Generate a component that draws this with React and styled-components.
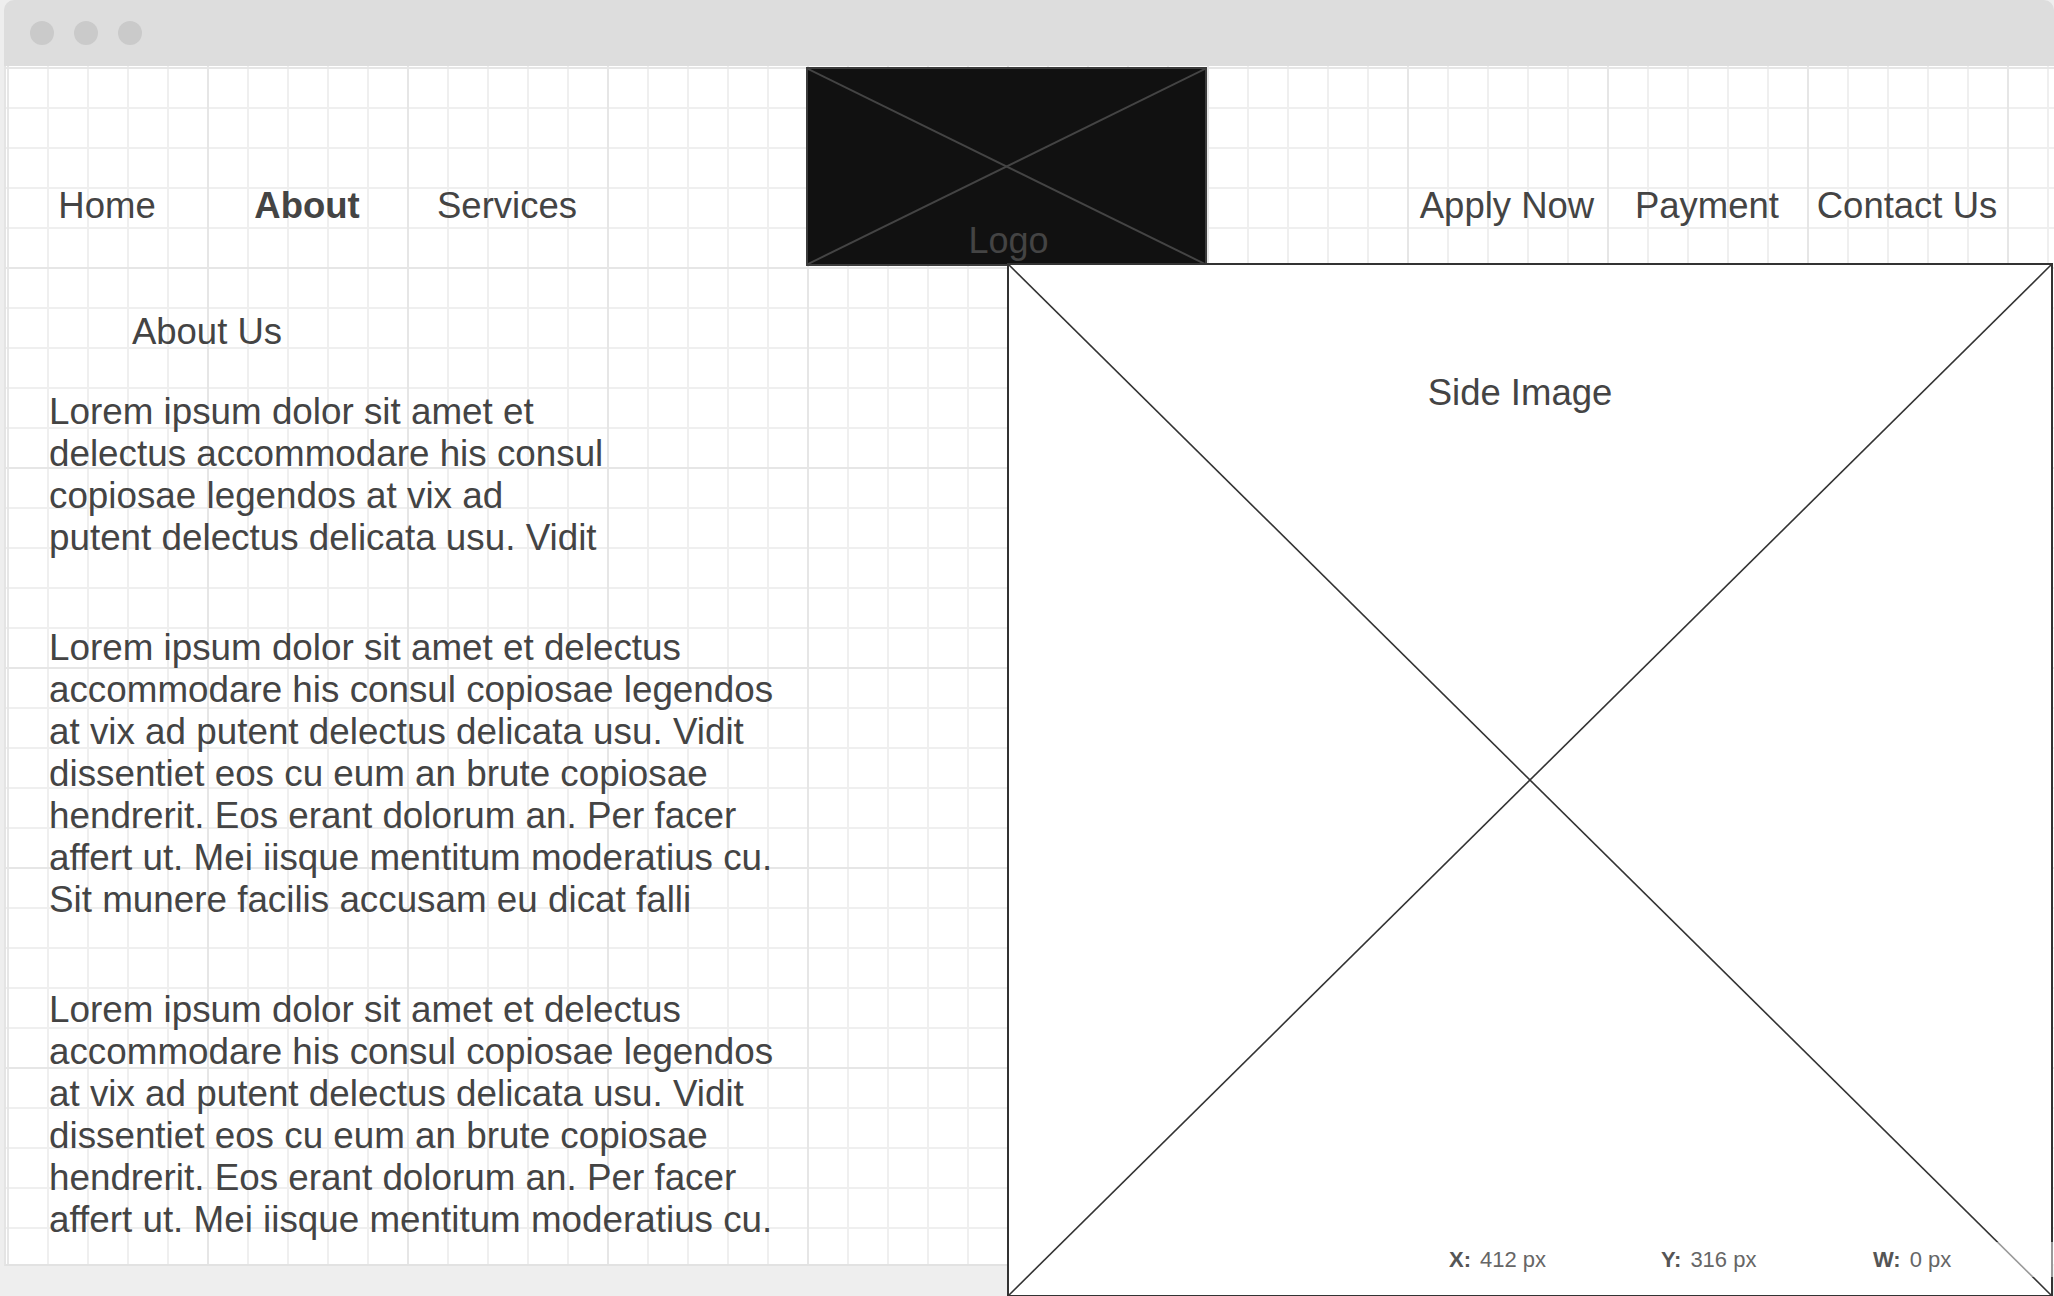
import React from "react";
import styled, { createGlobalStyle } from "styled-components";

const Global = createGlobalStyle`
  html, body {
    margin: 0;
    padding: 0;
    overflow: hidden;
    background: #eeeeee;
  }
  body {
    font-family: "Liberation Sans", Arial, sans-serif;
    color: #444444;
  }
  * { box-sizing: border-box; }
`;

const Page = styled.div`
  position: relative;
  width: 2054px;
  height: 1296px;
  overflow: hidden;
`;

const Frame = styled.div`
  margin-left: 4px;
  width: 2050px;
`;

const TitleBar = styled.div`
  height: 66px;
  background: #dddddd;
  border-radius: 10px 10px 0 0;
  display: flex;
  align-items: center;
  gap: 20px;
  padding-left: 26px;
`;

const Dot = styled.span`
  width: 24px;
  height: 24px;
  border-radius: 50%;
  background: #cacaca;
`;

const Canvas = styled.div`
  height: 1200px;
  background-color: #ffffff;
  border-left: 2px solid #e4e4e4;
  border-bottom: 2px solid #e2e2e2;
  padding-left: 1px;
  padding-top: 1px;
  background-image:
    linear-gradient(to right, #e6e6e6 0 2px, transparent 2px),
    linear-gradient(to bottom, #e6e6e6 0 2px, transparent 2px),
    linear-gradient(to right, #efefef 0 2px, transparent 2px),
    linear-gradient(to bottom, #efefef 0 2px, transparent 2px);
  background-size: 200px 200px, 200px 200px, 40px 40px, 40px 40px;
  background-position: 1px 1px;
`;

const Header = styled.header`
  display: grid;
  grid-template-columns: 200px 200px 200px 200px 400px 200px 200px 200px 200px;
  height: 199px;
`;

const NavItem = styled.div`
  display: flex;
  align-items: flex-end;
  justify-content: center;
  padding-bottom: 39px;
  font-size: 36.5px;
  line-height: 42px;
  font-weight: ${(p) => (p.$active ? 700 : 400)};
  color: #444444;
  white-space: nowrap;
`;

const LogoBox = styled.div`
  position: relative;
  height: 199px;
  margin-left: -1px;
  background: #111111;
  border: 2px solid #3c3c3c;
  display: flex;
  align-items: flex-end;
  justify-content: center;
  padding-bottom: 2px;
`;

const LogoText = styled.span`
  position: relative;
  font-size: 36px;
  line-height: 42px;
  color: #444444;
  padding-left: 4px;
`;

const Cross = styled.svg`
  position: absolute;
  inset: 0;
  width: 100%;
  height: 100%;
`;

const Main = styled.main`
  display: grid;
  grid-template-columns: 1000px 1046px;
  align-items: start;
`;

const TextColumn = styled.section`
  padding-left: 42px;
`;

const Heading = styled.h2`
  margin: 45px 0 0 -42px;
  width: 400px;
  text-align: center;
  font-size: 36.5px;
  line-height: 42px;
  font-weight: 400;
  color: #444444;
`;

const Paragraph = styled.p`
  margin: ${(p) => (p.$first ? "38px" : "68px")} 0 0;
  font-size: 36.8px;
  line-height: 42px;
  color: #444444;
`;

const Line = styled.span`
  display: block;
  white-space: nowrap;
`;

const SideImage = styled.div`
  position: relative;
  margin-top: -3px;
  height: 1034px;
  background: #ffffff;
  border: 2px solid #333333;
  display: flex;
  justify-content: center;
  padding: 107px 20px 0 0;
`;

const SideLabel = styled.span`
  position: relative;
  font-size: 36.5px;
  line-height: 42px;
  color: #444444;
`;

const Readout = styled.div`
  position: absolute;
  left: 1420px;
  top: 1242px;
  width: 634px;
  height: 35px;
  padding-left: 29px;
  display: flex;
  background: rgba(255, 255, 255, 0.5);
`;

const ReadoutItem = styled.div`
  flex: 0 0 212px;
  font-size: 22px;
  line-height: 35px;
  color: #666666;
  white-space: nowrap;
`;

const ReadoutLabel = styled.b`
  color: #555555;
  margin-right: 9px;
`;

const leftNav = [
  { label: "Home" },
  { label: "About", active: true },
  { label: "Services" },
];
const rightNav = ["Apply Now", "Payment", "Contact Us"];

const paragraphs = [
  [
    "Lorem ipsum dolor sit amet et",
    "delectus accommodare his consul",
    "copiosae legendos at vix ad",
    "putent delectus delicata usu. Vidit",
  ],
  [
    "Lorem ipsum dolor sit amet et delectus",
    "accommodare his consul copiosae legendos",
    "at vix ad putent delectus delicata usu. Vidit",
    "dissentiet eos cu eum an brute copiosae",
    "hendrerit. Eos erant dolorum an. Per facer",
    "affert ut. Mei iisque mentitum moderatius cu.",
    "Sit munere facilis accusam eu dicat falli",
  ],
  [
    "Lorem ipsum dolor sit amet et delectus",
    "accommodare his consul copiosae legendos",
    "at vix ad putent delectus delicata usu. Vidit",
    "dissentiet eos cu eum an brute copiosae",
    "hendrerit. Eos erant dolorum an. Per facer",
    "affert ut. Mei iisque mentitum moderatius cu.",
  ],
];

function XLines({ color, width }) {
  return (
    <Cross viewBox="0 0 100 100" preserveAspectRatio="none">
      <line x1="0" y1="0" x2="100" y2="100" stroke={color} strokeWidth={width} vectorEffect="non-scaling-stroke" />
      <line x1="100" y1="0" x2="0" y2="100" stroke={color} strokeWidth={width} vectorEffect="non-scaling-stroke" />
    </Cross>
  );
}

export default function App() {
  return (
    <Page>
      <Global />
      <Frame>
        <TitleBar>
          <Dot />
          <Dot />
          <Dot />
        </TitleBar>
        <Canvas>
          <Header>
            {leftNav.map((n) => (
              <NavItem key={n.label} $active={n.active}>
                {n.label}
              </NavItem>
            ))}
            <div />
            <LogoBox>
              <XLines color="#444444" width={2} />
              <LogoText>Logo</LogoText>
            </LogoBox>
            <div />
            {rightNav.map((label) => (
              <NavItem key={label}>{label}</NavItem>
            ))}
          </Header>
          <Main>
            <TextColumn>
              <Heading>About Us</Heading>
              {paragraphs.map((lines, i) => (
                <Paragraph key={i} $first={i === 0}>
                  {lines.map((l) => (
                    <Line key={l}>{l}</Line>
                  ))}
                </Paragraph>
              ))}
            </TextColumn>
            <SideImage>
              <XLines color="#333333" width={1.6} />
              <SideLabel>Side Image</SideLabel>
            </SideImage>
          </Main>
        </Canvas>
      </Frame>
      <Readout>
        <ReadoutItem>
          <ReadoutLabel>X:</ReadoutLabel>412 px
        </ReadoutItem>
        <ReadoutItem>
          <ReadoutLabel>Y:</ReadoutLabel>316 px
        </ReadoutItem>
        <ReadoutItem>
          <ReadoutLabel>W:</ReadoutLabel>0 px
        </ReadoutItem>
      </Readout>
    </Page>
  );
}
